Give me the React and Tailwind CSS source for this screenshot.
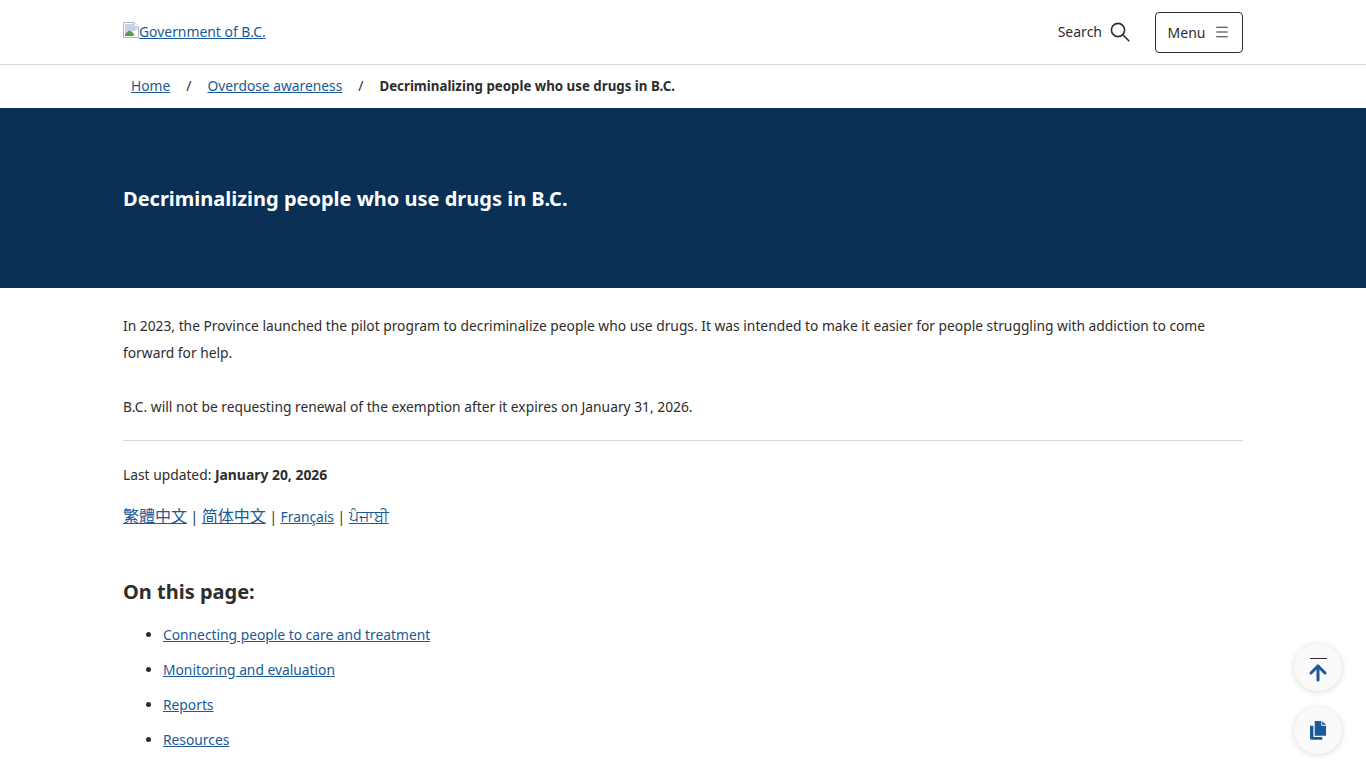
import React from "react";
import { Menu, ArrowUp } from "lucide-react";

const link = "text-[#1a5a96] underline";

function BrokenImage() {
  return (
    <svg width="16" height="16" viewBox="0 0 16 16" className="mb-[4px] shrink-0">
      <path d="M0.5 0.5H11L15.5 5V15.5H0.5Z" fill="#fff" stroke="#b4b4b4" />
      <path d="M2 2H10.5V5.5H14V8L2 12Z" fill="#c3d3ee" />
      <path d="M2 14V12L6 8.5L9 10L13 14Z" fill="#5b9a4a" />
      <path d="M9 15L15 9V15Z" fill="#fff" />
      <path d="M11 0.5V5H15.5" fill="#fff" stroke="#b4b4b4" />
    </svg>
  );
}

function SearchIcon() {
  return (
    <svg width="20" height="20" viewBox="0 0 20 20" fill="none" stroke="#2d2d2d" strokeWidth="1.6">
      <circle cx="8" cy="8" r="6.6" />
      <path d="M12.8 12.8L18.8 18.8" strokeLinecap="round" />
    </svg>
  );
}

function CopyIcon() {
  return (
    <svg width="17" height="19" viewBox="0 0 18 20" fill="#1a5a96">
      <path d="M5 0H12V5H17V15.5H5Z" />
      <path d="M13 0.2L17 4H13Z" />
      <path d="M0 5H3.6V17H13V19.8H1.5Q0 19.8 0 18.3Z" />
    </svg>
  );
}

export default function App() {
  return (
    <div className="relative h-[768px] overflow-hidden bg-white font-['Noto_Sans','Noto_Sans_CJK_TC',sans-serif] text-[13.8px] text-[#2d2d2d]">
      {/* Header */}
      <header className="h-[65px] border-b border-[#d8d8d8]">
        <div className="mx-[123px] flex h-[64px] items-center justify-between">
          <a className={`${link} flex items-center text-[13.9px]`}>
            <BrokenImage />
            <span>Government of B.C.</span>
          </a>
          <div className="flex items-center text-[14px]">
            <span className="mr-2 -translate-y-px">Search</span>
            <SearchIcon />
            <button className="ml-[25px] flex h-[41px] w-[88px] items-center justify-center gap-[9px] rounded-[4px] border border-[#2d2d2d]">
              <span>Menu</span>
              <Menu size={16} strokeWidth={1.6} />
            </button>
          </div>
        </div>
      </header>

      {/* Breadcrumb */}
      <nav className="mx-[131px] flex h-[43px] items-center">
        <a className={link}>Home</a>
        <span className="mx-4">/</span>
        <a className={link}>Overdose awareness</a>
        <span className="mx-4">/</span>
        <span className="text-[13.3px] font-bold">Decriminalizing people who use drugs in B.C.</span>
      </nav>

      {/* Banner */}
      <div className="flex h-[180px] items-center bg-[#0a3055] px-[123px]">
        <h1 className="translate-y-px text-[20px] font-bold text-white">Decriminalizing people who use drugs in B.C.</h1>
      </div>

      {/* Content */}
      <main className="mx-[123px] pt-[24px]">
        <p className="leading-[27px]">
          In 2023, the Province launched the pilot program to decriminalize people who use drugs. It was intended to make it easier for people struggling with addiction to come forward for help.
        </p>
        <p className="mt-[27px] leading-[27px]">
          B.C. will not be requesting renewal of the exemption after it expires on January 31, 2026.
        </p>
        <hr className="mt-[20px] border-[#d8d8d8]" />
        <p className="mt-[20px] leading-[27px]">
          Last updated: <strong className="text-[13.9px]">January 20, 2026</strong>
        </p>
        <p className="mt-[15px] leading-[27px]">
          <a className={`${link} text-[16px]`}>繁體中文</a> | <a className={`${link} text-[16px]`}>简体中文</a> | <a className={link}>Français</a> | <a className={`${link} text-[15.6px]`}>ਪੰਜਾਬੀ</a>
        </p>
        <h2 className="mt-[47px] text-[20px] font-bold leading-[30px]">On this page:</h2>
        <ul className="mt-[14px] list-disc pl-[40px] leading-[27px]">
          <li className="mb-[8px]"><a className={link}>Connecting people to care and treatment</a></li>
          <li className="mb-[8px]"><a className={link}>Monitoring and evaluation</a></li>
          <li className="mb-[8px]"><a className={link}>Reports</a></li>
          <li><a className={link}>Resources</a></li>
        </ul>
      </main>

      {/* Floating buttons */}
      <div className="absolute right-[24px] top-[644px] flex flex-col gap-[16px]">
        <button className="flex h-[47px] w-[48px] flex-col items-center justify-start rounded-full bg-[#fafafa] pt-[14px] shadow-[0_1px_6px_rgba(0,0,0,0.15)]">
          <span className="h-px w-[17px] bg-[#2d2d2d]" />
          <ArrowUp size={24} strokeWidth={3} className="mt-[2px] text-[#1a5a96]" />
        </button>
        <button className="flex h-[47px] w-[48px] items-center justify-center rounded-full bg-[#fafafa] shadow-[0_1px_6px_rgba(0,0,0,0.15)]">
          <CopyIcon />
        </button>
      </div>
    </div>
  );
}
